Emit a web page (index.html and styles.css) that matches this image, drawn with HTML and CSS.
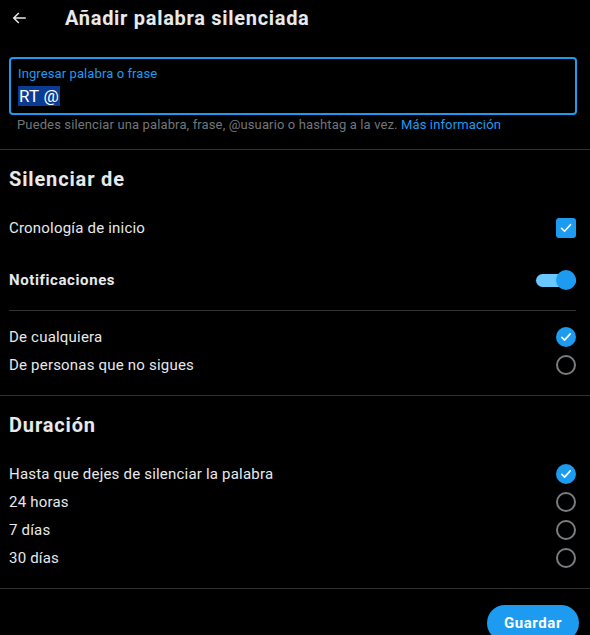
FILE: index.html
```html
<!DOCTYPE html>
<html lang="es">
<head>
<meta charset="utf-8">
<link rel="stylesheet" href="styles.css">
</head>
<body>
<div class="page">
  <header class="header">
    <span class="back">
      <svg viewBox="0 0 24 24" width="18" height="18"><path d="M7.414 13l5.043 5.04-1.414 1.42L3.586 12l7.457-7.46 1.414 1.42L7.414 11H21v2H7.414z" fill="#e7e9ea"/></svg>
    </span>
    <h1 class="title">Añadir palabra silenciada</h1>
  </header>

  <div class="field-wrap">
    <div class="field">
      <div class="field-label">Ingresar palabra o frase</div>
      <div class="field-value"><span class="sel">RT @</span></div>
    </div>
    <div class="help">Puedes silenciar una palabra, frase, @usuario o hashtag a la vez. <span class="link">Más información</span></div>
  </div>

  <div class="divider"></div>

  <section class="section s1">
    <h2 class="heading">Silenciar de</h2>
    <div class="row r-cron">
      <span>Cronología de inicio</span>
      <span class="checkbox"><svg viewBox="0 0 20 20" width="20" height="20"><path d="M5.5 10.3l3 3 6-6.6" fill="none" stroke="#fff" stroke-width="1.6" stroke-linecap="round" stroke-linejoin="round"/></svg></span>
    </div>
    <div class="row r-notif">
      <span class="bold">Notificaciones</span>
      <span class="toggle"><span class="track"></span><span class="thumb"></span></span>
    </div>
    <div class="inset-divider"></div>
    <div class="options o1">
      <div class="row opt">
        <span>De cualquiera</span>
        <span class="radio on"><svg viewBox="0 0 20 20" width="20" height="20"><path d="M5.8 10.3l2.8 2.8 5.6-6.2" fill="none" stroke="#fff" stroke-width="1.6" stroke-linecap="round" stroke-linejoin="round"/></svg></span>
      </div>
      <div class="row opt">
        <span>De personas que no sigues</span>
        <span class="radio"></span>
      </div>
    </div>
  </section>

  <div class="divider"></div>

  <section class="section s2">
    <h2 class="heading">Duración</h2>
    <div class="options o2">
      <div class="row opt">
        <span>Hasta que dejes de silenciar la palabra</span>
        <span class="radio on"><svg viewBox="0 0 20 20" width="20" height="20"><path d="M5.8 10.3l2.8 2.8 5.6-6.2" fill="none" stroke="#fff" stroke-width="1.6" stroke-linecap="round" stroke-linejoin="round"/></svg></span>
      </div>
      <div class="row opt"><span>24 horas</span><span class="radio"></span></div>
      <div class="row opt"><span>7 días</span><span class="radio"></span></div>
      <div class="row opt"><span>30 días</span><span class="radio"></span></div>
    </div>
  </section>

  <div class="divider"></div>

  <div class="footer">
    <button class="save">Guardar</button>
  </div>
</div>
</body>
</html>
```

FILE: styles.css
```css
* { box-sizing: border-box; }
html, body {
  margin: 0;
  padding: 0;
  background: #000;
  overflow: hidden;
}
body {
  font-family: Roboto, "Liberation Sans", sans-serif;
  color: #e7e9ea;
  font-size: 15px;
  letter-spacing: 0.2px;
}
.page {
  width: 590px;
  height: 635px;
  overflow: hidden;
}
.header {
  height: 36px;
  display: flex;
  align-items: center;
  padding-left: 10px;
}
.back {
  width: 18px;
  height: 18px;
  display: flex;
}
.title {
  margin: 0 0 0 37px;
  font-size: 20px;
  font-weight: 700;
  line-height: 24px;
  letter-spacing: 0.7px;
}
.field-wrap {
  padding: 21px 13px 0 9px;
}
.field {
  height: 58px;
  border: 2px solid #1d9bf0;
  border-radius: 4px;
  padding: 6px 0 0 7px;
}
.field-label {
  color: #1d9bf0;
  font-size: 13px;
  line-height: 17px;
  letter-spacing: 0.1px;
}
.field-value {
  margin-top: 3px;
  font-size: 17px;
  line-height: 22px;
}
.sel {
  background: #0a3c93;
  color: #fff;
  padding: 0 1px;
}
.help {
  color: #71767b;
  font-size: 13px;
  line-height: 16px;
  padding: 2px 0 0 8px;
  letter-spacing: 0.13px;
}
.link { color: #1d9bf0; }
.divider {
  height: 1px;
  background: #2f3336;
}
.s1 { padding: 17px 13px 16px 9px; }
.field-wrap + .divider { margin-top: 16px; }
.heading {
  margin: 0;
  font-size: 20px;
  font-weight: 700;
  line-height: 24px;
  letter-spacing: 0.85px;
}
.row {
  display: flex;
  align-items: center;
  justify-content: space-between;
  height: 28px;
  line-height: 20px;
}
.r-cron { margin-top: 23px; }
.r-notif { margin-top: 24px; }
.bold { font-weight: 700; letter-spacing: 0.6px; }
.inset-divider {
  height: 1px;
  background: #2f3336;
  margin-top: 16px;
  margin-right: 1px;
}
.options { display: flex; flex-direction: column; }
.o1 { margin-top: 12px; }
.checkbox {
  width: 20px;
  height: 20px;
  border-radius: 3px;
  background: #1d9bf0;
  display: flex;
  margin-right: 1px;
}
.toggle {
  position: relative;
  width: 40px;
  height: 20px;
  margin-right: 1px;
}
.track {
  position: absolute;
  left: 0;
  top: 4px;
  width: 40px;
  height: 13px;
  border-radius: 7px;
  background: #6ac7ff;
}
.thumb {
  position: absolute;
  right: 0;
  top: 0;
  width: 20px;
  height: 20px;
  border-radius: 50%;
  background: #1d9bf0;
}
.radio {
  width: 20px;
  height: 20px;
  border-radius: 50%;
  border: 2px solid #7a7d80;
  margin-right: 1px;
  display: flex;
}
.radio.on {
  border: none;
  background: #1d9bf0;
}
.s2 { padding: 17px 13px 16px 9px; }
.o2 { margin-top: 23px; }
.footer {
  display: flex;
  justify-content: flex-end;
  padding: 16px 11px 0 0;
}
.save {
  background: #1d9bf0;
  color: #fff;
  border: none;
  border-radius: 18px;
  height: 36px;
  width: 92px;
  font-family: Roboto, "Liberation Sans", sans-serif;
  font-weight: 700;
  font-size: 15px;
  letter-spacing: 0.6px;
  padding: 0;
}
```
